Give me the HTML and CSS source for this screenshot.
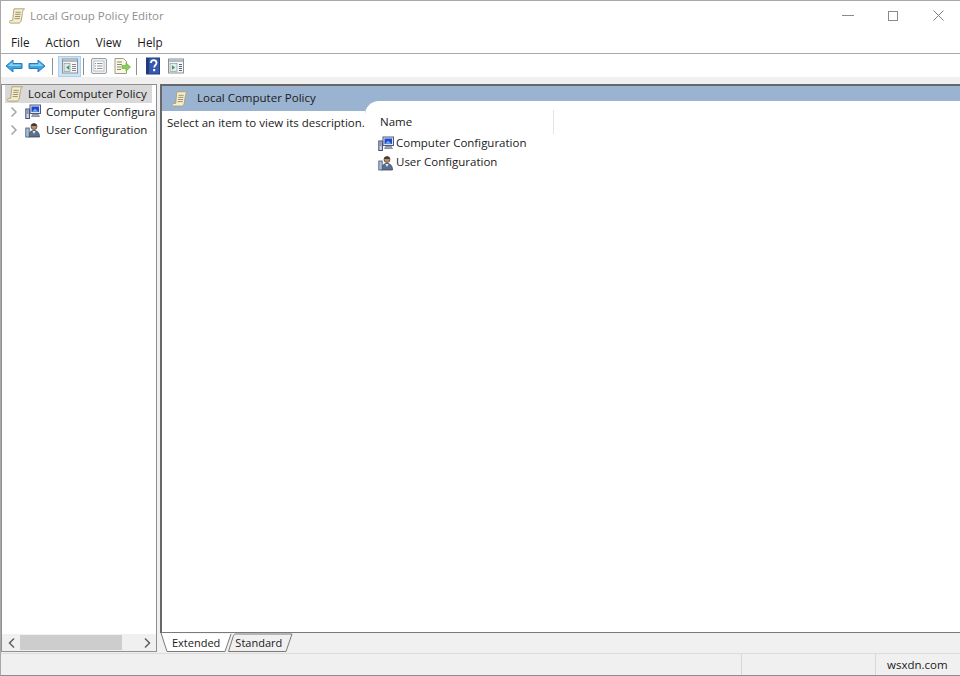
FILE: index.html
```html
<!DOCTYPE html>
<html lang="en">
<head>
<meta charset="utf-8">
<title>Local Group Policy Editor</title>
<link rel="stylesheet" href="styles.css">
</head>
<body>
<svg class="defs" width="0" height="0" aria-hidden="true">
  <defs>
    <symbol id="scroll" viewBox="0 0 16 16">
      <path d="M5 .800h10.500c-1.300 1-1.700 2-2 3.500l-1.200 7.700c-.3 1.700-1 2.700-2.200 3.100H1.700C.6 15.100.1 14.500.3 13.700c.2-.8.8-1.300 1.800-1.300h1.600L4.500 4c.1-1.300.2-2.300.5-3.200z" fill="#f5edcc" stroke="#a99d70" stroke-width=".9"/>
      <path d="M6.500 4.300h5.200M6.200 6.400h5.200M5.900 8.500h5.200M5.600 10.600h5.200" stroke="#8f8a6b" stroke-width=".9" fill="none"/>
    </symbol>
    <symbol id="computer" viewBox="0 0 16 16">
      <rect x="5" y="1" width="10.500" height="8.500" fill="#dfe6f2" stroke="#4a5a84"/>
      <rect x="6.500" y="2.500" width="7.500" height="5.500" fill="#1f49c8"/>
      <path d="M7 7.800l3-3 3.600 3z" fill="#7aa7ee"/>
      <path d="M8 10h5l1.500 2.500h-8z" fill="#9fa7b8" stroke="#5c6680" stroke-width=".6"/>
      <rect x=".8" y="5" width="3.600" height="9.500" fill="#cfd6e4" stroke="#3e4d74"/>
      <path d="M1.700 7h1.800M1.700 9h1.800" stroke="#36466e" stroke-width=".9"/>
    </symbol>
    <symbol id="user" viewBox="0 0 16 16">
      <circle cx="9" cy="4.500" r="3" fill="#b58f6e" stroke="#5c4634" stroke-width=".8"/>
      <path d="M6 3.500c.5-2 5-2.500 6 0l-1 .4H7z" fill="#3f3a38"/>
      <path d="M3.500 15c0-4 2-6.500 5.500-6.500s5.500 2.500 5.500 6.500z" fill="#5d6f8e" stroke="#35425a" stroke-width=".8"/>
      <rect x=".8" y="6" width="3.400" height="9" fill="#a9c0d8" stroke="#3f5570" stroke-width=".8"/>
      <path d="M7.500 9l1.500 3 1.500-3z" fill="#eef1f5"/>
    </symbol>
    <symbol id="arrow" viewBox="0 0 18 14">
      <path d="M8 1L1 7l7 6V9.500h9v-5H8z" fill="#3da7e0" stroke="#2d79b8" stroke-width="1" stroke-linejoin="round"/>
      <path d="M7.500 3L3 7h12.500V5.500h-8z" fill="#8fd3f4"/>
    </symbol>
    <symbol id="panel" viewBox="0 0 18 18">
      <rect x="1.500" y="2" width="15" height="14" fill="#f6f7f8" stroke="#8b9197"/>
      <rect x="2" y="2.500" width="14" height="2.500" fill="#b4b9be"/>
      <rect x="3" y="6.500" width="6" height="8" fill="#dbe5ec" stroke="#8f989f" stroke-width=".7"/>
      <path d="M8.200 8.200v4.600L5.200 10.500z" fill="#33a24a"/>
      <path d="M11 7.500h4M11 9.500h4M11 11.500h4M11 13.500h4" stroke="#7f878e"/>
    </symbol>
    <symbol id="panel-right" viewBox="0 0 18 18">
      <rect x="1.500" y="2" width="15" height="14" fill="#f6f7f8" stroke="#8b9197"/>
      <rect x="2" y="2.500" width="14" height="2.500" fill="#b4b9be"/>
      <rect x="3" y="6.500" width="7" height="8" fill="#e5eaee" stroke="#8f989f" stroke-width=".7"/>
      <path d="M5 8.200v4.600l3-2.300z" fill="#2f9f47"/>
      <path d="M12 7.500h3M12 9.500h3M12 11.500h3M12 13.500h3" stroke="#5e666d"/>
    </symbol>
    <symbol id="props" viewBox="0 0 18 18">
      <rect x="1.500" y="1.500" width="15" height="15" rx="1.500" fill="#eceff1" stroke="#9aa0a5"/>
      <rect x="4" y="4" width="10" height="10" fill="#fbfbfb" stroke="#a5abb0" stroke-width=".7"/>
      <path d="M7 6.500h5.500M7 9h5.500M7 11.500h5.500M5 6.500h1M5 9h1M5 11.500h1" stroke="#858b90" stroke-width=".9"/>
    </symbol>
    <symbol id="export" viewBox="0 0 18 18">
      <path d="M2 1.500h8.500l3 3v12H2z" fill="#f8f6e6" stroke="#a09e82"/>
      <path d="M4 5h5M4 7.500h5M4 10h4M4 12.500h4" stroke="#7d7c68" stroke-width=".9"/>
      <path d="M9 8.500h4V6l4.500 4-4.500 4v-2.500H9z" fill="#8ccf58" stroke="#62ad3e" stroke-width=".7"/>
    </symbol>
    <symbol id="help" viewBox="0 0 18 18">
      <rect x="2.500" y="1" width="13" height="16" fill="#3559ad" stroke="#24407f"/>
      <rect x="2.500" y="1" width="2.500" height="16" fill="#22397e"/>
      <path d="M7 6c0-2 1.200-2.800 2.700-2.800S12.500 4.200 12.500 6c0 2-2.300 2.300-2.300 4.500" fill="none" stroke="#fff" stroke-width="1.800"/>
      <rect x="9.200" y="12" width="2" height="2.200" fill="#fff"/>
    </symbol>
    <symbol id="chevron" viewBox="0 0 8 12">
      <path d="M1.500 1.500L6 6l-4.500 4.500" fill="none" stroke="#a6a6a6" stroke-width="1.500"/>
    </symbol>
  </defs>
</svg>

<div class="window">
  <header class="titlebar">
    <svg class="icon-16"><use href="#scroll"/></svg>
    <span class="title-text">Local Group Policy Editor</span>
    <div class="caption">
      <span class="cap-btn"><span class="cap-min"></span></span>
      <span class="cap-btn"><span class="cap-max"></span></span>
      <span class="cap-btn">
        <svg class="cap-close" viewBox="0 0 11 11"><path d="M.5.500l10 10M10.500.500l-10 10" stroke="#7d7d7d" fill="none"/></svg>
      </span>
    </div>
  </header>

  <nav class="menubar">
    <span class="menu-item">File</span>
    <span class="menu-item">Action</span>
    <span class="menu-item">View</span>
    <span class="menu-item">Help</span>
  </nav>

  <div class="toolbar">
    <svg class="tool-arrow"><use href="#arrow"/></svg>
    <svg class="tool-arrow flip"><use href="#arrow"/></svg>
    <span class="tool-sep sep-a"></span>
    <span class="tool-active"><svg class="tool-icon"><use href="#panel"/></svg></span>
    <span class="tool-sep sep-b"></span>
    <svg class="tool-icon"><use href="#props"/></svg>
    <svg class="tool-icon"><use href="#export"/></svg>
    <span class="tool-sep sep-c"></span>
    <svg class="tool-icon"><use href="#help"/></svg>
    <svg class="tool-icon"><use href="#panel-right"/></svg>
  </div>

  <main class="workspace">
    <aside class="tree-pane">
      <div class="tree">
        <div class="tree-root">
          <svg class="icon-16"><use href="#scroll"/></svg>
          <span class="label">Local Computer Policy</span>
        </div>
        <div class="tree-row">
          <svg class="chev"><use href="#chevron"/></svg>
          <svg class="icon-16"><use href="#computer"/></svg>
          <span class="label">Computer Configura</span>
        </div>
        <div class="tree-row">
          <svg class="chev"><use href="#chevron"/></svg>
          <svg class="icon-16"><use href="#user"/></svg>
          <span class="label">User Configuration</span>
        </div>
      </div>
      <div class="hscroll">
        <svg class="scroll-left" viewBox="0 0 8 12"><path d="M6 1.500L1.500 6 6 10.500" fill="none" stroke="#606060" stroke-width="1.500"/></svg>
        <div class="scroll-track"><div class="scroll-thumb"></div></div>
        <svg class="scroll-right" viewBox="0 0 8 12"><path d="M2 1.500L6.500 6 2 10.500" fill="none" stroke="#606060" stroke-width="1.500"/></svg>
      </div>
    </aside>

    <section class="details-pane">
      <div class="details">
        <div class="desc-col">
          <div class="desc-head">
            <svg class="icon-16"><use href="#scroll"/></svg>
            <span class="label">Local Computer Policy</span>
          </div>
          <p class="desc-text">Select an item to view its description.</p>
        </div>
        <div class="list-col">
          <div class="list">
            <div class="list-head"><span class="label">Name</span></div>
            <div class="list-row"><svg class="icon-16"><use href="#computer"/></svg><span class="label">Computer Configuration</span></div>
            <div class="list-row"><svg class="icon-16"><use href="#user"/></svg><span class="label">User Configuration</span></div>
          </div>
        </div>
      </div>
      <div class="tabs">
        <svg class="tab-shapes" width="140" height="21" viewBox="0 0 140 21">
          <path d="M1 0l6 18.500h58L71 1" fill="#fff" stroke="#7a7a7a"/>
          <path d="M68.500 18.500L73 4c.3-1 1-2.500 2-3h57L126 18.500z" fill="#f0f0f0" stroke="#7a7a7a"/>
        </svg>
        <span class="tab tab-ext">Extended</span>
        <span class="tab tab-std">Standard</span>
      </div>
    </section>
  </main>

  <footer class="statusbar">
    <span class="status-main"></span>
    <span class="status-mid"></span>
    <span class="status-end">wsxdn.com</span>
  </footer>
</div>
</body>
</html>
```

FILE: styles.css
```css
* { box-sizing: border-box; }
html, body { margin: 0; height: 100%; }
body {
  font-family: "Open Sans", "Liberation Sans", sans-serif;
  font-size: 11.5px;
  color: #1a1a1a;
  background: #fff;
  overflow: hidden;
}
svg.defs { display: block; height: 0; }
.window {
  width: 960px;
  height: 676px;
  display: flex;
  flex-direction: column;
  border-top: 1px solid #a8a8a8;
  border-left: 1px solid #a8a8a8;
  border-bottom: 1px solid #8c8c8c;
}
.icon-16 { width: 16px; height: 16px; flex: none; display: block; }
.label { margin-bottom: 2px; white-space: nowrap; }

.titlebar {
  height: 29px;
  display: flex;
  align-items: center;
  padding-left: 8px;
  flex: none;
}
.title-text { margin-left: 5px; color: #8f8f8f; }
.caption { margin-left: auto; display: flex; }
.cap-btn { width: 45px; height: 29px; display: flex; align-items: center; justify-content: center; }
.cap-min { width: 12px; height: 1px; background: #8a8a8a; }
.cap-max { width: 10px; height: 10px; border: 1px solid #8a8a8a; }
.cap-close { width: 11px; height: 11px; margin-left: 2px; }

.menubar {
  height: 24px;
  display: flex;
  align-items: center;
  gap: 16px;
  padding-left: 10px;
  border-bottom: 1px solid #a9a9a9;
  flex: none;
  font-size: 11.7px;
}

.toolbar {
  height: 23px;
  display: flex;
  align-items: center;
  padding: 1px 0 0 4px;
  flex: none;
}
.tool-arrow { width: 18px; height: 14px; flex: none; }
.tool-arrow.flip { transform: scaleX(-1); margin-left: 5px; }
.tool-sep { width: 1px; height: 17px; background: #8f8f8f; flex: none; }
.sep-a { margin: 0 5px 0 6px; }
.sep-b { margin: 0 6px 0 2px; }
.sep-c { margin: 0 7px 0 5px; }
.tool-icon { width: 18px; height: 18px; flex: none; display: block; }
.tool-icon + .tool-icon { margin-left: 5px; }
.tool-active {
  width: 23px;
  height: 21px;
  background: #cde4f7;
  border: 1px solid #a9d0ef;
  display: flex;
  align-items: center;
  justify-content: center;
}

.workspace {
  flex: 1;
  display: flex;
  min-height: 0;
  background: #f0f0f0;
  padding-top: 7px;
  gap: 3px;
}
.tree-pane {
  width: 156px;
  flex: none;
  display: flex;
  flex-direction: column;
  background: #fff;
  border: 1px solid #8f8f8f;
  margin-bottom: 1px;
}
.tree { flex: 1; }
.tree-root {
  height: 18px;
  margin-left: 3px;
  width: 147px;
  display: flex;
  align-items: center;
  background: #d9d9d9;
  gap: 5px;
  padding-left: 2px;
}
.tree-row {
  height: 18px;
  display: flex;
  align-items: center;
  padding-left: 8px;
  overflow: hidden;
}
.chev { width: 8px; height: 12px; flex: none; }
.tree-row .icon-16 { margin: 0 5px 0 7px; }
.hscroll {
  height: 17px;
  display: flex;
  align-items: center;
  background: #f0f0f0;
}
.scroll-left, .scroll-right { width: 8px; height: 12px; flex: none; }
.scroll-left { margin-left: 6px; }
.scroll-right { margin-left: 21px; }
.scroll-track { width: 102px; margin-left: 4px; }
.scroll-thumb { height: 15px; background: #cdcdcd; }

.details-pane {
  flex: 1;
  min-width: 0;
  display: flex;
  flex-direction: column;
}
.details {
  flex: 1;
  display: flex;
  min-height: 0;
  background: #fff;
  border-top: 2px solid #686868;
  border-left: 2px solid #686868;
  border-bottom: 1px solid #7a7a7a;
}
.desc-col { width: 203px; flex: none; }
.desc-head {
  height: 25px;
  display: flex;
  align-items: center;
  gap: 9px;
  padding-left: 10px;
  background: #9ab3d1;
}
.desc-text { margin: 4px 0 0 5px; white-space: nowrap; }
.list-col {
  flex: 1;
  display: flex;
  flex-direction: column;
  background: #9ab3d1;
}
.list {
  flex: 1;
  margin-top: 15px;
  padding: 9px 0 0 15px;
  background: #fff;
  border-top-left-radius: 14px;
}
.list-head {
  width: 174px;
  height: 24px;
  display: flex;
  align-items: center;
  border-right: 1px solid #e4e4e4;
}
.list-row {
  height: 19px;
  display: flex;
  align-items: center;
  gap: 2px;
}
.list-row .icon-16 { margin-left: -2px; }

.tabs {
  height: 20px;
  flex: none;
  position: relative;
  display: flex;
  align-items: center;
  padding: 0 0 2px 12px;
  font-size: 11px;
}
.tab-shapes { position: absolute; left: 0; top: 0; }
.tab { position: relative; }
.tab-std { margin-left: 15px; }

.statusbar {
  height: 22px;
  flex: none;
  display: flex;
  background: #f0f0f0;
  border-top: 1px solid #dcdcdc;
}
.status-main { width: 741px; border-right: 1px solid #d8d8d8; }
.status-mid { width: 134px; border-right: 1px solid #d8d8d8; }
.status-end { padding-left: 11px; line-height: 21px; }
```
